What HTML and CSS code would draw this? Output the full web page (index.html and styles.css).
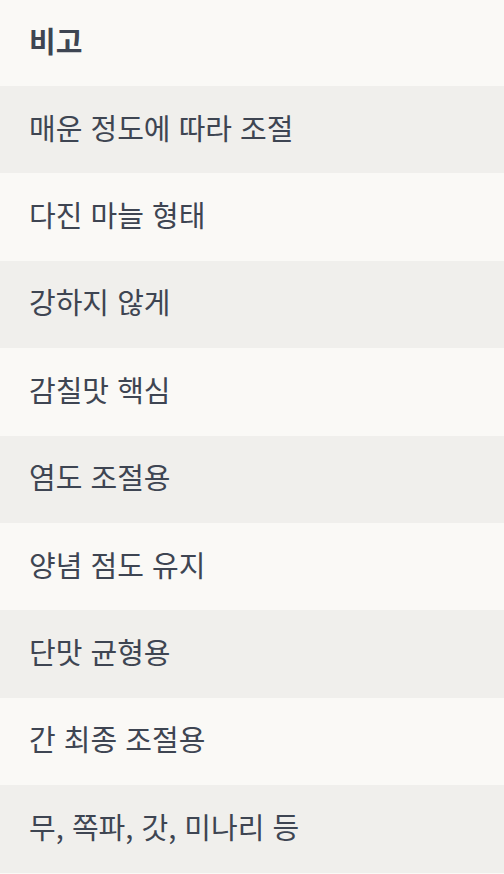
FILE: index.html
```html
<!DOCTYPE html>
<html lang="ko">
<head>
<meta charset="utf-8">
<link rel="stylesheet" href="styles.css">
</head>
<body>
<div class="table">
  <div class="row head">비고</div>
  <div class="row alt">매운 정도에 따라 조절</div>
  <div class="row">다진 마늘 형태</div>
  <div class="row alt">강하지 않게</div>
  <div class="row">감칠맛 핵심</div>
  <div class="row alt">염도 조절용</div>
  <div class="row">양념 점도 유지</div>
  <div class="row alt">단맛 균형용</div>
  <div class="row">간 최종 조절용</div>
  <div class="row alt">무, 쪽파, 갓, 미나리 등</div>
</div>
</body>
</html>
```
FILE: styles.css
```css
html, body {
  margin: 0;
  padding: 0;
  background: #faf9f6;
}
.table {
  display: flex;
  flex-direction: column;
  font-family: "Noto Sans CJK KR", "Noto Sans", sans-serif;
  font-size: 29px;
  line-height: 40px;
  color: #3e4552;
}
.row {
  height: 87.4px;
  display: flex;
  align-items: center;
  padding-left: 29px;
  padding-bottom: 6px;
  box-sizing: border-box;
  background: #faf9f6;
}
.row.head {
  height: 86px;
  font-weight: 700;
}
.row.alt {
  background: #f0efec;
}
```
